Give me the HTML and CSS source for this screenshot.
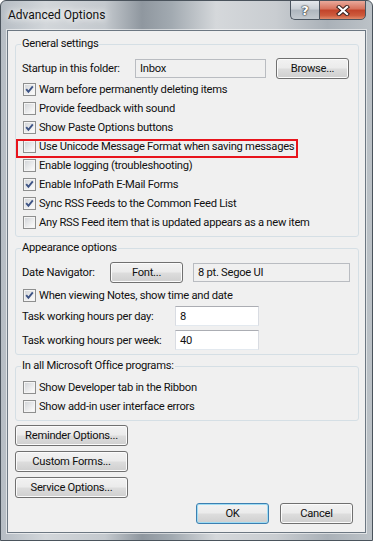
FILE: index.html
```html
<!DOCTYPE html>
<html lang="en">
<head>
  <meta charset="UTF-8" />
  <title>Advanced Options</title>
  <link rel="stylesheet" href="styles.css">
</head>
<body>

<div class="window">
  <div class="titlebar">
    <span class="title">Advanced Options</span>
    <div class="caption-buttons">
      <span class="cap-btn help">?</span>
      <span class="cap-btn close">
        <svg width="14" height="11" viewBox="0 0 14 11">
          <path d="M3 2 L11 9 M11 2 L3 9" stroke="#3a2320" stroke-width="4.2" stroke-linecap="square" fill="none"/>
          <path d="M3 2 L11 9 M11 2 L3 9" stroke="#fff" stroke-width="2.2" stroke-linecap="square" fill="none"/>
        </svg>
      </span>
    </div>
  </div>

  <div class="client">
    <fieldset class="group group-general">
      <legend>General settings</legend>
      <div class="field-row startup-row">
        <span class="label startup-label">Startup in this folder:</span>
        <span class="textbox readonly startup-box">Inbox</span>
        <span class="button browse-btn">Browse...</span>
      </div>
      <div class="checks">
        <div class="check-row"><span class="check"><svg viewBox="0 0 13 13"><path d="M3.2 6.2 L5.4 8.8 L9.8 3.4" /></svg></span>Warn before permanently deleting items</div>
        <div class="check-row"><span class="check"></span>Provide feedback with sound</div>
        <div class="check-row"><span class="check"><svg viewBox="0 0 13 13"><path d="M3.2 6.2 L5.4 8.8 L9.8 3.4" /></svg></span>Show Paste Options buttons</div>
        <div class="check-row marked"><span class="check"></span>Use Unicode Message Format when saving messages</div>
        <div class="check-row"><span class="check"></span>Enable logging (troubleshooting)</div>
        <div class="check-row"><span class="check"><svg viewBox="0 0 13 13"><path d="M3.2 6.2 L5.4 8.8 L9.8 3.4" /></svg></span>Enable InfoPath E-Mail Forms</div>
        <div class="check-row"><span class="check"><svg viewBox="0 0 13 13"><path d="M3.2 6.2 L5.4 8.8 L9.8 3.4" /></svg></span>Sync RSS Feeds to the Common Feed List</div>
        <div class="check-row"><span class="check"></span>Any RSS Feed item that is updated appears as a new item</div>
      </div>
    </fieldset>

    <fieldset class="group group-appearance">
      <legend>Appearance options</legend>
      <div class="field-row font-row">
        <span class="label nav-label">Date Navigator:</span>
        <span class="button font-btn">Font...</span>
        <span class="textbox readonly font-box">8 pt. Segoe UI</span>
      </div>
      <div class="check-row notes-row"><span class="check"><svg viewBox="0 0 13 13"><path d="M3.2 6.2 L5.4 8.8 L9.8 3.4" /></svg></span>When viewing Notes, show time and date</div>
      <div class="field-row hours-row">
        <span class="label hours-label">Task working hours per day:</span>
        <span class="textbox hours-box">8</span>
      </div>
      <div class="field-row hours-row week-row">
        <span class="label hours-label">Task working hours per week:</span>
        <span class="textbox hours-box">40</span>
      </div>
    </fieldset>

    <fieldset class="group group-office">
      <legend>In all Microsoft Office programs:</legend>
      <div class="checks">
        <div class="check-row"><span class="check"></span>Show Developer tab in the Ribbon</div>
        <div class="check-row"><span class="check"></span>Show add-in user interface errors</div>
      </div>
    </fieldset>

    <div class="side-buttons">
      <span class="button wide-btn">Reminder Options...</span>
      <span class="button wide-btn">Custom Forms...</span>
      <span class="button wide-btn">Service Options...</span>
    </div>

    <div class="dialog-buttons">
      <span class="button default-btn">OK</span>
      <span class="button">Cancel</span>
    </div>
  </div>
</div>

</body>
</html>
```

FILE: styles.css
```css
html, body {
  margin: 0; padding: 0;
  font-family: Roboto, "Open Sans", sans-serif;
  font-size: 11.2px;
  letter-spacing: -0.27px;
  color: #111;
}

.window {
  width: 373px;
  height: 541px;
  box-sizing: border-box;
  display: flex;
  flex-direction: column;
  border: 1px solid #4a535c;
  border-radius: 6px 6px 0 0;
  background: linear-gradient(to right, #b6bdc4 0%, #d2d6da 12%, #c4c9ce 28%, #8f979f 38%, #a2aab1 46%, #d5d8db 58%, #c9cdd1 74%, #aab1b8 88%, #bcc2c7 100%);
  overflow: hidden;
}

/* title bar */
.titlebar {
  height: 29px;
  display: flex;
  align-items: flex-start;
  padding-left: 7px;
}

.title {
  margin-top: 6px;
  font-size: 12px;
  line-height: 16px;
  letter-spacing: 0;
  text-shadow: 0 0 6px #fff, 0 0 10px #fff;
}

.caption-buttons {
  margin-left: auto;
  margin-right: 6px;
  display: flex;
  margin-top: -1px;
}

.cap-btn {
  height: 20px;
  box-sizing: border-box;
  display: flex;
  align-items: center;
  justify-content: center;
  border: 1px solid #4b5560;
}

.help {
  width: 29px;
  border-right: none;
  border-radius: 0 0 0 5px;
  background: linear-gradient(#e4e8ec, #c9cfd5 45%, #aeb6be 50%, #c3c9cf);
  color: #fff;
  font-weight: bold;
  font-size: 13px;
  font-family: "DejaVu Sans", sans-serif;
  text-shadow: 0 0 1px #333, 0 0 1px #333, 0 0 2px #333;
}

.close {
  width: 47px;
  border-radius: 0 0 5px 0;
  background: linear-gradient(#e9a99b, #d6705a 45%, #c2432a 50%, #cd5a3c 80%, #e08a6a);
}

.close svg { display: block; }

/* client area */
.client {
  flex: 1;
  margin: 0 6px 7px 6px;
  border: 1px solid #6c7782;
  box-shadow: 0 0 0 1px rgba(255, 255, 255, 0.55);
  background: #f0f0f0;
  padding: 5px 6px 0 7px;
  display: flex;
  flex-direction: column;
}

.group {
  margin: 3px 0 0 0;
  padding: 0 6px 4px 6px;
  border: 1px solid #d5dfe5;
  border-radius: 3px;
  min-inline-size: 0;
}

.group-general { margin-top: 0; }

.group legend {
  padding: 0 1px;
  margin-left: -1px;
  line-height: 16px;
}

.field-row {
  display: flex;
  align-items: center;
}

.startup-row { margin-top: 6px; height: 21px; }
.startup-label { width: 113px; }
.startup-box { width: 131px; height: 19px; margin-right: 10px; }

.checks { margin-top: 1px; }
.group-office .checks { margin-top: 4px; }

.check-row {
  display: flex;
  align-items: center;
  height: 19px;
  white-space: nowrap;
}

.check-row.marked { position: relative; }

.check-row.marked::after {
  content: "";
  position: absolute;
  left: -6px;
  top: 2px;
  width: 282px;
  height: 19px;
  box-sizing: border-box;
  border: 2px solid #e8141c;
}

.check {
  width: 13px;
  height: 13px;
  box-sizing: border-box;
  margin: 0 3px 0 1px;
  border: 1px solid #8e8f8f;
  background: linear-gradient(135deg, #cfd2d6, #f7f7f7 80%);
  box-shadow: inset 0 0 0 1px #f4f4f4;
  flex-shrink: 0;
}

.check svg {
  display: block;
  width: 13px;
  height: 13px;
  margin: -1px;
}

.check path {
  fill: none;
  stroke: #3d5385;
  stroke-width: 1.9;
}

.textbox {
  display: flex;
  align-items: center;
  box-sizing: border-box;
  padding-left: 4px;
  background: #fff;
  border: 1px solid #abadb3;
  border-color: #abadb3 #d9dce2 #e3e9ef #d9dce2;
}

.textbox.readonly {
  background: #f0f0f0;
  border-color: #b9bcc1;
}

.button {
  display: flex;
  align-items: center;
  justify-content: center;
  box-sizing: border-box;
  height: 21px;
  width: 73px;
  border: 1px solid #707070;
  border-radius: 3px;
  background: linear-gradient(#f2f2f2 0%, #ebebeb 48%, #dddddd 52%, #cfcfcf 100%);
  box-shadow: inset 0 0 0 1px #fbfbfb;
}

.font-row { margin-top: 6px; height: 21px; }
.nav-label { width: 88px; }
.font-box { width: 157px; height: 19px; margin-left: 10px; }

.notes-row { margin-top: 3px; }

.hours-row { margin-top: 1px; height: 20px; }
.week-row { margin-top: 4px; }
.hours-label { width: 153px; }
.hours-box { width: 84px; height: 20px; }

.side-buttons {
  margin-top: 4px;
  display: flex;
  flex-direction: column;
  gap: 5px;
}

.wide-btn { width: 113px; }

.dialog-buttons {
  margin-top: 5px;
  display: flex;
  justify-content: flex-end;
  gap: 11px;
  padding-right: 6px;
}

.default-btn {
  border-color: #3c7fb1;
  box-shadow: inset 0 0 0 1px #9fdcf3;
}
```
